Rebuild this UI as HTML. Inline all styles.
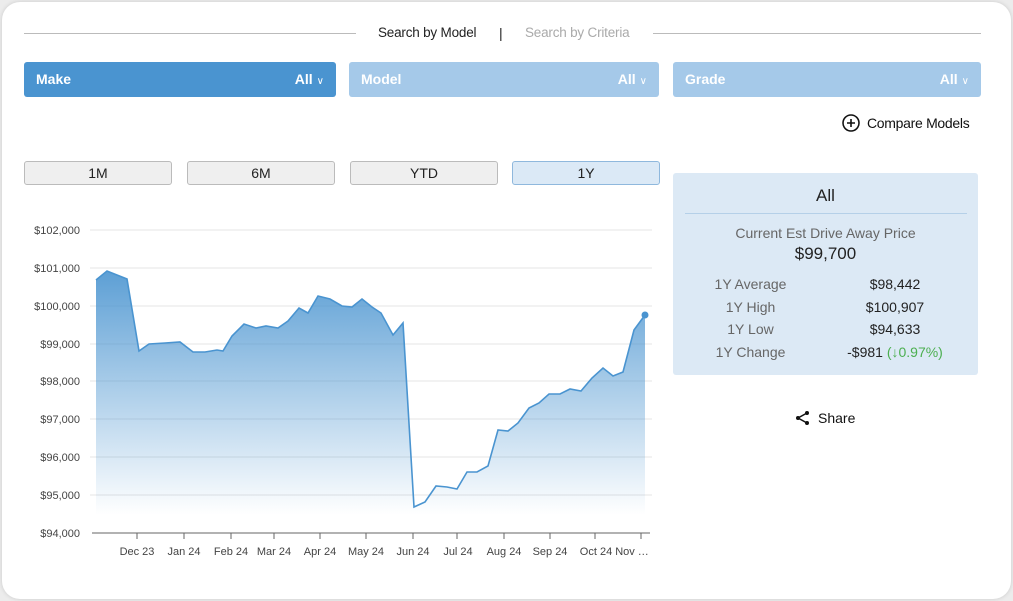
<!DOCTYPE html>
<html><head><style>
body{margin:0;background:#ececec;font-family:"Liberation Sans",sans-serif;}
.card{position:absolute;left:2px;top:2px;width:1009px;height:597px;background:#fff;border-radius:18px;box-shadow:0 0 4px rgba(0,0,0,.15);}
.abs{position:absolute}
.dd{position:absolute;top:62px;height:35px;border-radius:3px;color:#fff;font-size:14px;font-weight:bold;box-sizing:border-box;padding:0 12px;line-height:35px;}
.dd span{float:right}
.dd i{font-style:normal;font-weight:normal;font-size:10px;margin-left:4px}
.btn{position:absolute;top:161px;height:24px;width:148px;border:1px solid #bbb;border-radius:3px;background:#efefef;text-align:center;line-height:23px;font-size:14px;color:#222;box-sizing:border-box}
.row{position:absolute;font-size:14px;color:#666}
</style></head><body>
<div class="card"></div>
<div class="abs" style="left:24px;top:33px;width:332px;height:1px;background:#bbb"></div>
<div class="abs" style="left:653px;top:33px;width:328px;height:1px;background:#bbb"></div>
<div class="abs" style="left:378px;top:25px;font-size:13.5px;color:#222;letter-spacing:-0.2px">Search by Model</div>
<div class="abs" style="left:499px;top:25px;font-size:14px;color:#222">|</div>
<div class="abs" style="left:525px;top:25px;font-size:13.5px;color:#aaa;letter-spacing:-0.2px">Search by Criteria</div>
<div class="dd" style="left:24px;width:312px;background:#4a94d0">Make<span>All<i>∨</i></span></div>
<div class="dd" style="left:349px;width:310px;background:#a5c9e9">Model<span>All<i>∨</i></span></div>
<div class="dd" style="left:673px;width:308px;background:#a5c9e9">Grade<span>All<i>∨</i></span></div>
<svg class="abs" style="left:841px;top:113px" width="20" height="20"><circle cx="10" cy="10" r="8" fill="none" stroke="#111" stroke-width="1.6"/><path d="M10 6v8M6 10h8" stroke="#111" stroke-width="1.6"/></svg>
<div class="abs" style="left:867px;top:115px;font-size:14px;color:#111;letter-spacing:-0.3px">Compare Models</div>
<div class="btn" style="left:24px">1M</div>
<div class="btn" style="left:187px">6M</div>
<div class="btn" style="left:350px">YTD</div>
<div class="btn" style="left:512px;background:#dbe9f6;border-color:#8fb8dd">1Y</div>
<div class="abs" style="left:673px;top:173px;width:305px;height:202px;background:#dce9f5;border-radius:3px"></div>
<div class="abs" style="left:673px;top:186px;width:305px;text-align:center;font-size:17px;color:#222">All</div>
<div class="abs" style="left:685px;top:213px;width:282px;height:1px;background:#b5d0e8"></div>
<div class="abs" style="left:673px;top:225px;width:305px;text-align:center;font-size:14px;color:#666">Current Est Drive Away Price</div>
<div class="abs" style="left:673px;top:244px;width:305px;text-align:center;font-size:17px;color:#222">$99,700</div>
<div class="row" style="left:673px;top:276px;width:155px;text-align:center">1Y Average</div>
<div class="row" style="left:673px;top:299px;width:155px;text-align:center">1Y High</div>
<div class="row" style="left:673px;top:321px;width:155px;text-align:center">1Y Low</div>
<div class="row" style="left:673px;top:344px;width:155px;text-align:center">1Y Change</div>
<div class="row" style="left:820px;top:276px;width:150px;text-align:center;color:#222">$98,442</div>
<div class="row" style="left:820px;top:299px;width:150px;text-align:center;color:#222">$100,907</div>
<div class="row" style="left:820px;top:321px;width:150px;text-align:center;color:#222">$94,633</div>
<div class="row" style="left:820px;top:344px;width:150px;text-align:center;color:#222">-$981 <span style="color:#4caf50">(↓0.97%)</span></div>
<svg class="abs" style="left:795px;top:410px" width="16" height="16"><circle cx="12" cy="3" r="2" fill="#111"/><circle cx="3" cy="8" r="2" fill="#111"/><circle cx="12" cy="13" r="2" fill="#111"/><path d="M12 3L3 8L12 13" stroke="#111" stroke-width="1.5" fill="none"/></svg>
<div class="abs" style="left:818px;top:410px;font-size:14px;color:#111">Share</div>
<svg class="abs" style="left:0;top:0" width="670" height="570" font-family="Liberation Sans" font-size="11" fill="#444">
<defs><linearGradient id="g" x1="0" y1="270" x2="0" y2="515" gradientUnits="userSpaceOnUse"><stop offset="0" stop-color="#4a94d0" stop-opacity=".9"/><stop offset="1" stop-color="#4a94d0" stop-opacity="0"/></linearGradient></defs>
<g stroke="#e4e4e4"><path d="M90 230H652M90 268H652M90 306H652M90 344H652M90 381H652M90 419H652M90 457H652M90 495H652"/></g>
<g text-anchor="end"><text x="80" y="234">$102,000</text><text x="80" y="272">$101,000</text><text x="80" y="310">$100,000</text><text x="80" y="348">$99,000</text><text x="80" y="385">$98,000</text><text x="80" y="423">$97,000</text><text x="80" y="461">$96,000</text><text x="80" y="499">$95,000</text><text x="80" y="537">$94,000</text></g>
<path d="M96 280L107 271L127 279L139 351L149 344L165 343L180 342L193 352L205 352L217 350L223 351L232 336L244 324L256 328L266 326L278 328L288 321L299 308L308 313L318 296L330 299L342 306L352 307L362 299L372 307L381 313L393 335L403 323L414 507L425 502L436 486L447 487L457 489L467 472L477 472L488 466L498 430L508 431L518 423L529 408L539 403L549 394L560 394L570 389L581 391L592 378L603 368L613 376L623 372L634 330L645 315L645 520L96 520Z" fill="url(#g)"/>
<path d="M96 280L107 271L127 279L139 351L149 344L165 343L180 342L193 352L205 352L217 350L223 351L232 336L244 324L256 328L266 326L278 328L288 321L299 308L308 313L318 296L330 299L342 306L352 307L362 299L372 307L381 313L393 335L403 323L414 507L425 502L436 486L447 487L457 489L467 472L477 472L488 466L498 430L508 431L518 423L529 408L539 403L549 394L560 394L570 389L581 391L592 378L603 368L613 376L623 372L634 330L645 315" fill="none" stroke="#4a94d0" stroke-width="1.6"/>
<circle cx="645" cy="315" r="3.5" fill="#4a94d0"/>
<path d="M92 533H650M137 533v6M184 533v6M231 533v6M274 533v6M320 533v6M366 533v6M413 533v6M457 533v6M504 533v6M550 533v6M595 533v6M641 533v6" stroke="#666"/>
<g text-anchor="middle"><text x="137" y="555">Dec 23</text><text x="184" y="555">Jan 24</text><text x="231" y="555">Feb 24</text><text x="274" y="555">Mar 24</text><text x="320" y="555">Apr 24</text><text x="366" y="555">May 24</text><text x="413" y="555">Jun 24</text><text x="458" y="555">Jul 24</text><text x="504" y="555">Aug 24</text><text x="550" y="555">Sep 24</text><text x="596" y="555">Oct 24</text><text x="632" y="555">Nov …</text></g>
</svg>
</body></html>
